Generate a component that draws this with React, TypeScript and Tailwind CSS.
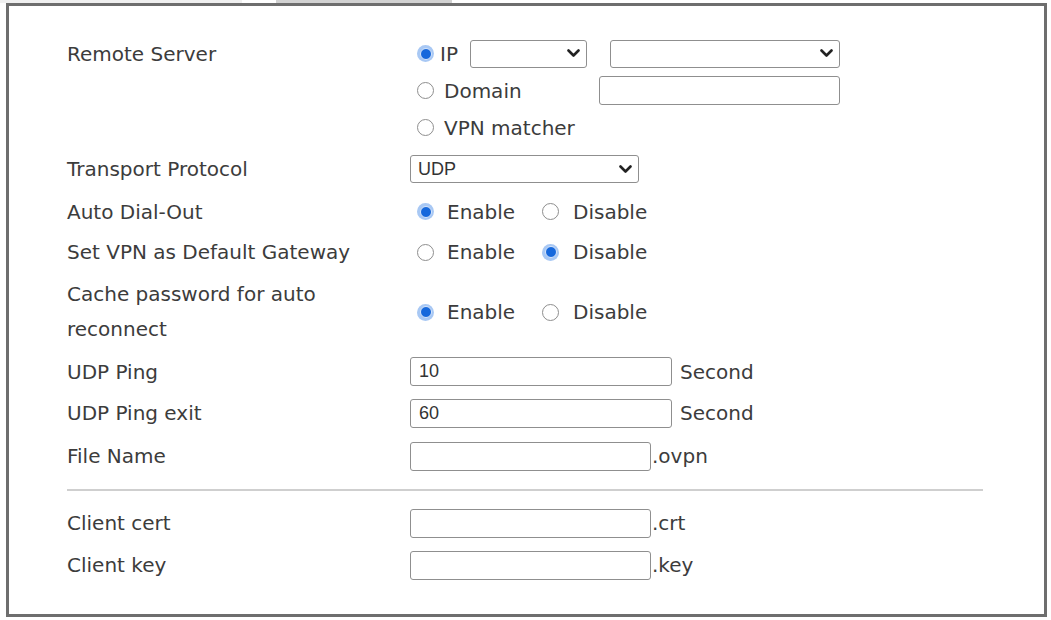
import React from "react";

function Radio({ checked }: { checked?: boolean }) {
  if (checked) {
    return (
      <span className="inline-flex w-[17px] h-[17px] rounded-full bg-[#a8c8f4] items-center justify-center shrink-0">
        <span className="w-[12px] h-[12px] rounded-full bg-[#1668dc] border border-[#d8e6fb]" />
      </span>
    );
  }
  return <span className="inline-block w-[17px] h-[17px] rounded-full border-[1.5px] border-[#8e8e8e] bg-white shrink-0" />;
}

function Chevron() {
  return (
    <svg width="13" height="9" viewBox="0 0 13 9" className="shrink-0">
      <polyline points="1.5,1.5 6.5,6.5 11.5,1.5" fill="none" stroke="#222" strokeWidth="2.6" strokeLinecap="round" strokeLinejoin="round" />
    </svg>
  );
}

function Select({ w, value }: { w: string; value?: string }) {
  return (
    <div className={`${w} h-[28px] border border-[#8f8f8f] rounded-[3px] bg-white flex items-center justify-between pl-[7px] pr-[6px] shrink-0`}>
      <span className="font-['Liberation_Sans'] text-[18px] text-[#333]">{value ?? ""}</span>
      <Chevron />
    </div>
  );
}

function Input({ w, value }: { w: string; value?: string }) {
  return (
    <div className={`${w} h-[29px] border border-[#8f8f8f] rounded-[3px] bg-white flex items-center pl-[8px] shrink-0`}>
      <span className="font-['Liberation_Sans'] text-[18px] text-[#333]">{value ?? ""}</span>
    </div>
  );
}

function EnDis({ enable }: { enable: boolean }) {
  return (
    <div className="flex items-center pl-[7px]">
      <Radio checked={enable} />
      <span className="w-[108px] pl-[13px]">Enable</span>
      <Radio checked={!enable} />
      <span className="ml-[14px]">Disable</span>
    </div>
  );
}

function Row({ h, label, children }: { h: string; label?: React.ReactNode; children?: React.ReactNode }) {
  return (
    <div className={`flex items-center ${h}`}>
      <div className="w-[343px] shrink-0">{label}</div>
      <div className="flex items-center">{children}</div>
    </div>
  );
}

export default function App() {
  return (
    <div className="w-[1051px] h-[620px] bg-white overflow-hidden font-['DejaVu_Sans',_Verdana,_sans-serif] text-[20px] text-[#3c3c3c]">
      <div className="h-[3px] flex">
        <div className="w-[242px] bg-[#f0f0f0]" />
        <div className="ml-[34px] w-[176px] bg-[#d2d2d2]" />
      </div>
      <div className="ml-[6px] w-[1041px] h-[614px] border-[3px] border-[#6e6e6e] pl-[58px] pt-[29px]">
        {/* Remote Server */}
        <div className="flex">
          <div className="w-[343px] shrink-0 h-[37px] flex items-center">Remote Server</div>
          <div className="flex flex-col">
            <div className="h-[37px] flex items-center pl-[7px]">
              <Radio checked />
              <span className="ml-[6px] w-[30px]">IP</span>
              <Select w="w-[117px]" />
              <span className="ml-[23px]"><Select w="w-[230px]" /></span>
            </div>
            <div className="h-[37px] flex items-center pl-[7px]">
              <Radio />
              <span className="ml-[10px] w-[155px]">Domain</span>
              <Input w="w-[241px]" />
            </div>
            <div className="h-[37px] flex items-center pl-[7px]">
              <Radio />
              <span className="ml-[10px]">VPN matcher</span>
            </div>
          </div>
        </div>
        <Row h="h-[46px]" label="Transport Protocol">
          <Select w="w-[229px]" value="UDP" />
        </Row>
        <Row h="h-[39px]" label="Auto Dial-Out">
          <EnDis enable />
        </Row>
        <Row h="h-[42px]" label="Set VPN as Default Gateway">
          <EnDis enable={false} />
        </Row>
        <Row
          h="h-[78px]"
          label={
            <div className="leading-[35px]">
              Cache password for auto
              <br />
              reconnect
            </div>
          }
        >
          <EnDis enable />
        </Row>
        <Row h="h-[41px]" label="UDP Ping">
          <Input w="w-[262px]" value="10" />
          <span className="ml-[8px]">Second</span>
        </Row>
        <Row h="h-[42px]" label="UDP Ping exit">
          <Input w="w-[262px]" value="60" />
          <span className="ml-[8px]">Second</span>
        </Row>
        <Row h="h-[44px]" label="File Name">
          <Input w="w-[241px]" />
          <span className="ml-[1px]">.ovpn</span>
        </Row>
        <div className="h-[24px] flex items-center">
          <div className="w-[916px] h-[2px] bg-[#cfcfcf]" />
        </div>
        <Row h="h-[42px]" label="Client cert">
          <Input w="w-[241px]" />
          <span className="ml-[1px]">.crt</span>
        </Row>
        <Row h="h-[42px]" label="Client key">
          <Input w="w-[241px]" />
          <span className="ml-[1px]">.key</span>
        </Row>
      </div>
    </div>
  );
}
